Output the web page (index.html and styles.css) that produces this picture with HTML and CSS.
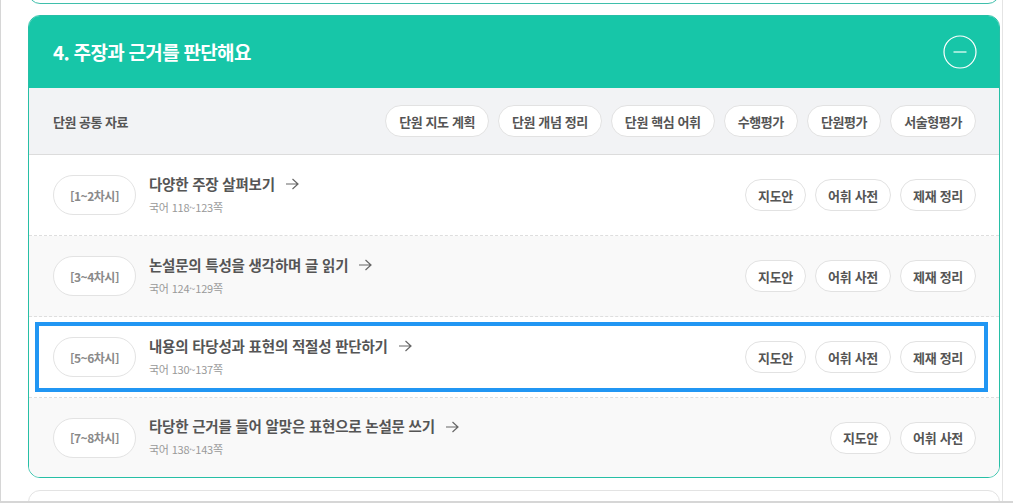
FILE: index.html
```html
<!DOCTYPE html>
<html lang="ko">
<head>
<meta charset="UTF-8">
<title>4. 주장과 근거를 판단해요</title>
<link rel="stylesheet" href="styles.css">
</head>
<body>

<div class="screen">
  <div class="feed">

    <section class="unit unit-prev"></section>

    <section class="unit unit-open">

      <header class="unit-head">
        <h2>4. 주장과 근거를 판단해요</h2>
        <button class="fold" type="button" aria-label="접기">
          <svg width="34" height="34" viewBox="0 0 34 34">
            <circle cx="17" cy="17" r="16" fill="none" stroke="#fff" stroke-width="1.2"/>
            <line x1="10.5" y1="17" x2="23.5" y2="17" stroke="#c8f5ea" stroke-width="1.6"/>
          </svg>
        </button>
      </header>

      <div class="common">
        <span class="common-label">단원 공통 자료</span>
        <div class="chips">
          <a class="chip">단원 지도 계획</a>
          <a class="chip">단원 개념 정리</a>
          <a class="chip">단원 핵심 어휘</a>
          <a class="chip">수행평가</a>
          <a class="chip">단원평가</a>
          <a class="chip">서술형평가</a>
        </div>
      </div>

      <ul class="lessons">

        <li class="lesson">
          <span class="period">[1~2차시]</span>
          <div class="lesson-text">
            <a class="lesson-title">다양한 주장 살펴보기
              <svg class="go" width="14" height="12" viewBox="0 0 14 12"><path d="M1 6H13M7.5 1L13 6L7.5 11" fill="none" stroke="#666" stroke-width="1.2"/></svg>
            </a>
            <span class="pages">국어 118~123쪽</span>
          </div>
          <div class="chips">
            <a class="chip">지도안</a>
            <a class="chip">어휘 사전</a>
            <a class="chip">제재 정리</a>
          </div>
        </li>

        <li class="lesson">
          <span class="period">[3~4차시]</span>
          <div class="lesson-text">
            <a class="lesson-title">논설문의 특성을 생각하며 글 읽기
              <svg class="go" width="14" height="12" viewBox="0 0 14 12"><path d="M1 6H13M7.5 1L13 6L7.5 11" fill="none" stroke="#666" stroke-width="1.2"/></svg>
            </a>
            <span class="pages">국어 124~129쪽</span>
          </div>
          <div class="chips">
            <a class="chip">지도안</a>
            <a class="chip">어휘 사전</a>
            <a class="chip">제재 정리</a>
          </div>
        </li>

        <li class="lesson is-focus">
          <span class="period">[5~6차시]</span>
          <div class="lesson-text">
            <a class="lesson-title">내용의 타당성과 표현의 적절성 판단하기
              <svg class="go" width="14" height="12" viewBox="0 0 14 12"><path d="M1 6H13M7.5 1L13 6L7.5 11" fill="none" stroke="#666" stroke-width="1.2"/></svg>
            </a>
            <span class="pages">국어 130~137쪽</span>
          </div>
          <div class="chips">
            <a class="chip">지도안</a>
            <a class="chip">어휘 사전</a>
            <a class="chip">제재 정리</a>
          </div>
        </li>

        <li class="lesson">
          <span class="period">[7~8차시]</span>
          <div class="lesson-text">
            <a class="lesson-title">타당한 근거를 들어 알맞은 표현으로 논설문 쓰기
              <svg class="go" width="14" height="12" viewBox="0 0 14 12"><path d="M1 6H13M7.5 1L13 6L7.5 11" fill="none" stroke="#666" stroke-width="1.2"/></svg>
            </a>
            <span class="pages">국어 138~143쪽</span>
          </div>
          <div class="chips">
            <a class="chip">지도안</a>
            <a class="chip">어휘 사전</a>
          </div>
        </li>

      </ul>
    </section>

    <section class="unit unit-next"></section>

  </div>
</div>

</body>
</html>
```

FILE: styles.css
```css
*
{
  box-sizing : border-box;
}

html, body
{
  margin : 0;
  padding : 0;
  background : #fff;
}

body
{
  font-family : "Noto Sans CJK KR", "Noto Sans", sans-serif;
  color : #555;
}

ul
{
  margin : 0;
  padding : 0;
  list-style : none;
}

a
{
  text-decoration : none;
  color : inherit;
}

/* рамка окна */
.screen
{
  width : 1013px;
  height : 503px;
  overflow : hidden;
  border-left : 1px solid #d6d6d6;
  border-bottom : 2px solid #d6d6d6;
}

.feed
{
  width : 1002px;
  height : 501px;
  overflow : hidden;
  padding-left : 27px;
  border-right : 1px solid #e4e4e4;
}

.unit
{
  width : 972px;
  border-radius : 12px;
  background : #fff;
}

.unit-prev
{
  height : 44px;
  margin-top : -40px;
  border : 1px solid #3fbfab;
}

.unit-open
{
  margin-top : 11px;
  border : 1px solid #27bfa6;
  overflow : hidden;
}

.unit-next
{
  height : 60px;
  margin-top : 12px;
  border : 1px solid #e3e3e3;
}

/* заголовок раздела */
.unit-head
{
  height : 73px;
  margin : -1px -1px 0;
  padding : 0 24px 0 25px;
  background : #17c6a8;
  display : flex;
  align-items : center;
  justify-content : space-between;
}

.unit-head h2
{
  margin : 0;
  font-size : 19px;
  font-weight : 700;
  letter-spacing : -0.7px;
  color : #fff;
}

.fold
{
  border : 0;
  padding : 0;
  background : none;
  display : flex;
  margin-right : -1px;
}

/* общие материалы */
.common
{
  height : 67px;
  padding : 0 23px 0 24px;
  background : #f2f3f5;
  border-bottom : 1px solid #dcdcdc;
  display : flex;
  align-items : center;
  justify-content : space-between;
}

.common-label
{
  font-size : 13px;
  font-weight : 700;
  letter-spacing : -0.5px;
  color : #555;
}

.chips
{
  display : flex;
  gap : 9px;
}

.chip
{
  height : 32px;
  padding : 0 12px;
  border : 1px solid #e2e2e2;
  border-radius : 16px;
  background : #fff;
  display : flex;
  align-items : center;
  font-size : 13px;
  font-weight : 700;
  letter-spacing : -0.3px;
  color : #555;
  white-space : nowrap;
}

.common .chip
{
  padding : 0 13px;
  letter-spacing : -0.4px;
}

/* уроки */
.lesson
{
  position : relative;
  height : 81px;
  padding : 0 23px 0 24px;
  border-bottom : 1px dashed #dedede;
  display : flex;
  align-items : center;
}

.lesson:nth-child(even)
{
  background : #f9f9f9;
}

.lesson:last-child
{
  border-bottom : 0;
  height : 79px;
}

.is-focus:after
{
  content : "";
  position : absolute;
  left : 6px;
  right : 11px;
  top : 5px;
  bottom : 5px;
  border : 4px solid #2196f3;
  pointer-events : none;
}

.period
{
  height : 40px;
  padding : 0 16px;
  border : 1px solid #e3e3e3;
  border-radius : 20px;
  background : #fff;
  display : flex;
  align-items : center;
  font-size : 12px;
  font-weight : 700;
  letter-spacing : -0.5px;
  color : #8a8a8a;
}

.lesson-text
{
  flex : 1;
  margin-left : 13px;
  display : flex;
  flex-direction : column;
  margin-top : -2px;
}

.lesson-title
{
  display : flex;
  align-items : center;
  gap : 10px;
  font-size : 14.5px;
  line-height : 20px;
  font-weight : 700;
  letter-spacing : -0.2px;
  color : #555;
}

.go
{
  margin-top : 1px;
}

.pages
{
  margin-top : 5px;
  font-size : 11px;
  line-height : 16px;
  letter-spacing : -0.2px;
  color : #999;
}
```
